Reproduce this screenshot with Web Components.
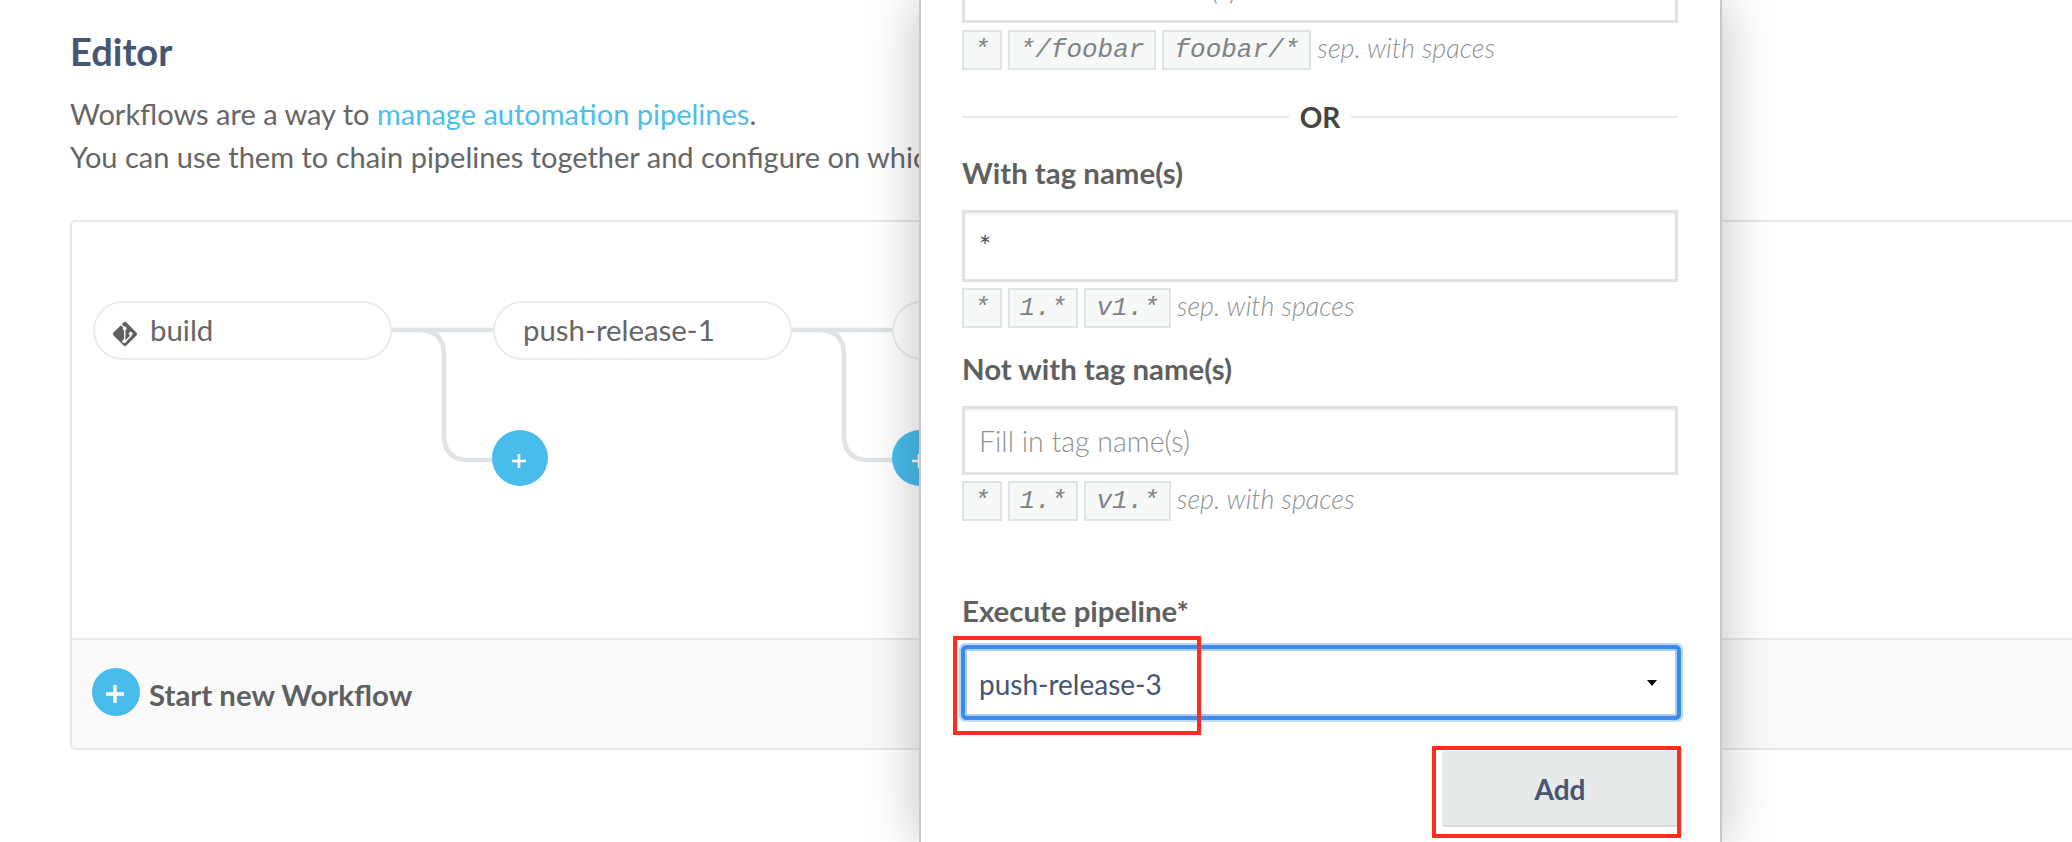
<!DOCTYPE html>
<html lang="en">
<head>
<meta charset="utf-8">
<title>Workflows editor</title>
<style>
  html, body { margin: 0; height: 100%; background: #fff; }
  body { font-family: Lato, "Liberation Sans", sans-serif; color: #5f6060; overflow: hidden; }
</style>
</head>
<body>

<wf-page>
  <wf-editor-head slot="head">
    Workflows are a way to <a>manage automation pipelines</a>.<br>
    You can use them to chain pipelines together and configure on which
  </wf-editor-head>

  <wf-card slot="card">
    <wf-diagram>
      <wf-node x="21" y="79"><wf-git-icon></wf-git-icon>build</wf-node>
      <wf-node x="421" y="79">push-release-1</wf-node>
      <wf-node x="820" y="79"></wf-node>
      <wf-plus x="420" y="208"></wf-plus>
      <wf-plus x="820" y="208"></wf-plus>
    </wf-diagram>
    <wf-footer>Start new Workflow</wf-footer>
  </wf-card>

  <wf-modal slot="modal">
    <wf-input style="height:69px" placeholder="Fill in branch name(s)"></wf-input>
    <wf-hints style="margin-top:7px" chips="* */foobar foobar/*"></wf-hints>
    <wf-or></wf-or>
    <wf-label style="margin-top:23px">With tag name(s)</wf-label>
    <wf-input style="height:72px" value="*"></wf-input>
    <wf-hints style="margin-top:6px" chips="* 1.* v1.*"></wf-hints>
    <wf-label style="margin-top:24px">Not with tag name(s)</wf-label>
    <wf-input style="height:69px" placeholder="Fill in tag name(s)"></wf-input>
    <wf-hints style="margin-top:6px" chips="* 1.* v1.*"></wf-hints>
    <wf-label style="margin-top:73px">Execute pipeline*</wf-label>
    <wf-select value="push-release-3"></wf-select>
    <wf-button>Add</wf-button>
    <wf-mark style="left:32px;top:636px;width:248px;height:99px"></wf-mark>
    <wf-mark style="left:511px;top:746px;width:249px;height:92px"></wf-mark>
  </wf-modal>
</wf-page>

<script>
class WfPage extends HTMLElement {
  constructor() {
    super()
    this.attachShadow({ mode: 'open' }).innerHTML = `
      <style>
        :host { display: block; position: relative; height: 842px; overflow: hidden; padding-left: 70px; box-sizing: border-box; }
      </style>
      <slot name="head"></slot>
      <slot name="card"></slot>
      <slot name="modal"></slot>
    `
  }
}

class WfEditorHead extends HTMLElement {
  constructor() {
    super()
    this.attachShadow({ mode: 'open' }).innerHTML = `
      <style>
        :host { display: block; height: 220px; padding-top: 31px; box-sizing: border-box; font-size: 29px; font-weight: 400; line-height: 43px; color: #666; }
        h2 { margin: 0 0 21px; font-size: 38px; line-height: 40px; font-weight: 700; color: #465571; }
        ::slotted(a) { color: #4ac0ec; }
        p { margin: 0; white-space: nowrap; }
      </style>
      <h2>Editor</h2>
      <p><slot></slot></p>
    `
  }
}

class WfCard extends HTMLElement {
  constructor() {
    super()
    this.attachShadow({ mode: 'open' }).innerHTML = `
      <style>
        :host { display: block; width: 2100px; height: 530px; box-sizing: border-box; border: 2px solid #e6eaea; border-radius: 6px; }
      </style>
      <slot></slot>
    `
  }
}

class WfDiagram extends HTMLElement {
  constructor() {
    super()
    this.attachShadow({ mode: 'open' }).innerHTML = `
      <style>
        :host { display: block; position: relative; height: 416px; }
        svg { position: absolute; left: 0; top: 0; }
        path { fill: none; stroke: #dfe3e5; stroke-width: 4.5; }
      </style>
      <svg width="1000" height="416">
        <path d="M319 108H821"/>
        <path d="M347 108Q372 108 372 133V213Q372 238 397 238H421"/>
        <path d="M747 108Q772 108 772 133V213Q772 238 797 238H821"/>
      </svg>
      <slot></slot>
    `
  }
}

class WfNode extends HTMLElement {
  constructor() {
    super()
    this.attachShadow({ mode: 'open' }).innerHTML = `
      <style>
        :host { position: absolute; display: flex; align-items: center; gap: 12px; box-sizing: border-box; width: 299px; height: 59px; padding: 0 0 2px 28px; background: #fff; border: 2px solid #e8ecec; border-radius: 30px; font-size: 29.4px; color: #666; }
      </style>
      <slot></slot>
    `
    this.style.left = this.getAttribute('x') + 'px'
    this.style.top = this.getAttribute('y') + 'px'
  }
}

class WfGitIcon extends HTMLElement {
  constructor() {
    super()
    this.attachShadow({ mode: 'open' }).innerHTML = `
      <style>:host { display: block; width: 26px; height: 26px; margin: 3px 0 0 -11px; }</style>
      <svg width="26" height="26" viewBox="0 0 26 26">
        <rect x="3.9" y="3.9" width="18.2" height="18.2" rx="2" transform="rotate(45 13 13)" fill="#5f6060"/>
        <path d="M9 3.5L12.7 7V20M18.7 12.7V15L12.7 21" fill="none" stroke="#fff" stroke-width="1.4"/>
        <circle cx="12.7" cy="7.4" r="1.9" fill="#fff"/>
        <circle cx="18.7" cy="12.7" r="1.9" fill="#fff"/>
        <circle cx="12.2" cy="20.2" r="1.9" fill="#fff"/>
      </svg>
    `
  }
}

class WfPlus extends HTMLElement {
  constructor() {
    super()
    this.attachShadow({ mode: 'open' }).innerHTML = `
      <style>
        :host { position: absolute; display: flex; align-items: center; justify-content: center; width: 56px; height: 56px; border-radius: 50%; background: #48bdeb; }
        svg { margin: 6px 3px 0 0; }
      </style>
      <svg width="14" height="14"><path d="M7 0V14M0 7H14" stroke="#fff" stroke-width="2.6"/></svg>
    `
    this.style.left = this.getAttribute('x') + 'px'
    this.style.top = this.getAttribute('y') + 'px'
  }
}

class WfFooter extends HTMLElement {
  constructor() {
    super()
    this.attachShadow({ mode: 'open' }).innerHTML = `
      <style>
        :host { display: flex; align-items: center; gap: 9px; box-sizing: border-box; height: 110px; padding: 0 0 0 20px; background: #fafafa; border-top: 2px solid #e6eaea; border-radius: 0 0 5px 5px; font-size: 29.4px; font-weight: 700; color: #5f6060; }
        .round { display: flex; align-items: center; justify-content: center; width: 48px; height: 48px; margin-top: -4px; border-radius: 50%; background: #48bdeb; }
        .round svg { margin: 4px 2px 0 0; }
      </style>
      <span class="round"><svg width="18" height="18"><path d="M9 0V18M0 9H18" stroke="#fff" stroke-width="3.4"/></svg></span>
      <slot></slot>
    `
  }
}

class WfModal extends HTMLElement {
  constructor() {
    super()
    this.attachShadow({ mode: 'open' }).innerHTML = `
      <style>
        :host { position: absolute; left: 919px; top: 0; bottom: 0; width: 803px; box-sizing: border-box; background: #fff; border: solid #c8c8c8; border-width: 0 2px; box-shadow: 0 0 50px rgba(0, 0, 0, .25); }
        .clip { height: 100%; overflow: hidden; position: relative; }
        .body { margin: -46px 42px 0 41px; }
      </style>
      <div class="clip"><div class="body"><slot></slot></div></div>
    `
  }
}

class WfLabel extends HTMLElement {
  constructor() {
    super()
    this.attachShadow({ mode: 'open' }).innerHTML = `
      <style>
        :host { display: block; height: 36px; margin-bottom: 18px; font-size: 29.4px; font-weight: 700; line-height: 34px; color: #5f6060; }
      </style>
      <slot></slot>
    `
  }
}

class WfInput extends HTMLElement {
  constructor() {
    super()
    const value = this.getAttribute('value')
    const text = value || this.getAttribute('placeholder')
    this.attachShadow({ mode: 'open' }).innerHTML = `
      <style>
        :host { display: flex; align-items: center; box-sizing: border-box; padding: 0 14px; background: #fff; border: 3px solid #dfe3e5; box-shadow: inset 0 2px 2px rgba(0, 0, 0, .05); font-size: 28.5px; font-weight: ${value ? 400 : 300}; color: ${value ? '#465571' : '#8f9293'}; }
      </style>
      ${text}
    `
  }
}

class WfHints extends HTMLElement {
  constructor() {
    super()
    const chips = this.getAttribute('chips').split(' ')
    this.attachShadow({ mode: 'open' }).innerHTML = `
      <style>
        :host { display: flex; align-items: center; gap: 6px; height: 40px; }
        code { box-sizing: border-box; height: 40px; padding: 0 10px; background: #f6f9f8; border: 2px solid #dfe5e5; font: italic 26px/36px "Liberation Mono", monospace; color: #808283; }
        em { margin-top: -5px; font-size: 27px; font-weight: 300; color: #8f9293; }
      </style>
      ${chips.map(c => `<code>${c}</code>`).join('')}
      <em>sep. with spaces</em>
    `
  }
}

class WfOr extends HTMLElement {
  constructor() {
    super()
    this.attachShadow({ mode: 'open' }).innerHTML = `
      <style>
        :host { display: flex; align-items: center; gap: 11px; height: 32px; margin-top: 31px; font-size: 28px; font-weight: 700; color: #444; }
        i { flex: 1; height: 2px; background: #e6eaea; }
      </style>
      <i></i>OR<i></i>
    `
  }
}

class WfSelect extends HTMLElement {
  constructor() {
    super()
    this.attachShadow({ mode: 'open' }).innerHTML = `
      <style>
        :host { display: flex; align-items: center; justify-content: space-between; box-sizing: border-box; height: 67px; margin: 19px 1px 0 3px; padding: 2px 18px 0 12px; background: #fff; border: 2px solid #a9cdf6; border-radius: 2px; box-shadow: 0 0 0 4px #3a8bec, 0 0 0 6px #bcd8fa; font-size: 28px; color: #465571; }
        i { width: 0; height: 0; margin-top: -2px; border: 5.5px solid transparent; border-top: 6px solid #000; border-bottom: 0; }
      </style>
      <span>${this.getAttribute('value')}</span><i></i>
    `
  }
}

class WfButton extends HTMLElement {
  constructor() {
    super()
    this.attachShadow({ mode: 'open' }).innerHTML = `
      <style>
        :host { display: flex; align-items: center; justify-content: center; box-sizing: border-box; width: 236px; height: 76px; margin: 35px 0 0 auto; padding-top: 2px; background: #e7eaeb; border-bottom: 2px solid #d8dcdc; border-radius: 3px; font-size: 28px; font-weight: 700; color: #465571; }
      </style>
      <slot></slot>
    `
  }
}

class WfMark extends HTMLElement {
  constructor() {
    super()
    this.attachShadow({ mode: 'open' }).innerHTML = `
      <style>
        :host { position: absolute; box-sizing: border-box; border: 4.5px solid #ff2d20; }
      </style>
    `
  }
}

customElements.define('wf-page', WfPage)
customElements.define('wf-editor-head', WfEditorHead)
customElements.define('wf-card', WfCard)
customElements.define('wf-diagram', WfDiagram)
customElements.define('wf-node', WfNode)
customElements.define('wf-git-icon', WfGitIcon)
customElements.define('wf-plus', WfPlus)
customElements.define('wf-footer', WfFooter)
customElements.define('wf-modal', WfModal)
customElements.define('wf-label', WfLabel)
customElements.define('wf-input', WfInput)
customElements.define('wf-hints', WfHints)
customElements.define('wf-or', WfOr)
customElements.define('wf-select', WfSelect)
customElements.define('wf-button', WfButton)
customElements.define('wf-mark', WfMark)
</script>
</body>
</html>
